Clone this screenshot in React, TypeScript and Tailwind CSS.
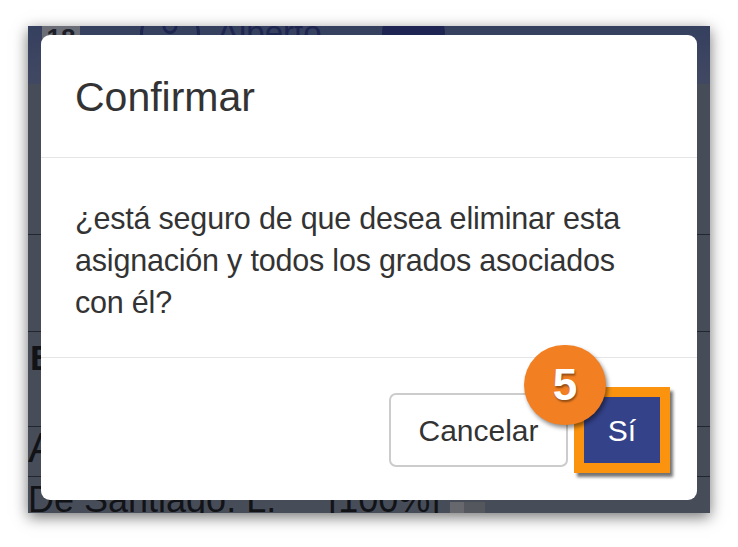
import { User } from "lucide-react";

const font = { fontFamily: '"Liberation Sans", Arial, sans-serif' };

const BackgroundRow = ({ children, className }: { children?: React.ReactNode; className?: string }) => (
  <div className={`border-b border-[#23262f] flex items-start ${className ?? ""}`}>{children}</div>
);

const App = () => {
  return (
    <div className="w-[738px] h-[547px] bg-white pl-[28px] pt-[26px]" style={font}>
      <div className="relative w-[682px] h-[487px] overflow-hidden bg-[#474c59] shadow-[0_4px_14px_rgba(0,0,0,0.55)]">
        {/* page behind the dialog */}
        <div className="h-[58px] bg-gradient-to-b from-[#35405f] to-[#414862] flex items-start pl-[14px]">
          <div className="w-[38px] h-[30px] bg-[#6b6e76] text-[#1c1f27] text-[26px] font-bold leading-[24px] text-center">18</div>
          <div className="w-[60px] h-[60px] ml-[60px] -mt-[22px] rounded-full border-[3px] border-[#1d2550] flex items-center justify-center">
            <User size={36} color="#1d2550" />
          </div>
          <span className="ml-[17px] -mt-[10px] text-[33px] leading-none text-[#1d2550]">Alberto</span>
          <div className="w-[63px] h-[54px] ml-[60px] -mt-[20px] rounded-full bg-[#1e2552]" />
        </div>
        <BackgroundRow className="h-[151px]" />
        <BackgroundRow className="h-[97px]" />
        <BackgroundRow className="h-[95px] pt-[8px]">
          <span className="text-[35px] leading-none font-bold text-[#111317] pl-[2px]">B</span>
        </BackgroundRow>
        <BackgroundRow className="h-[50px]">
          <span className="text-[42px] leading-none text-[#111317]">A</span>
        </BackgroundRow>
        <div className="pt-[5px] flex items-start text-[36px] leading-none text-[#111317]">
          <span>De Santiago. L.</span>
          <span className="ml-[52px]">[100%]</span>
          <span className="ml-[10px] mt-[20px] w-[35px] h-[20px] flex">
            <span className="w-[14px] bg-[#66686e]" />
            <span className="flex-1 bg-[#55575e]" />
          </span>
        </div>

        {/* dialog */}
        <div className="absolute left-[13px] top-[9px] w-[656px] h-[465px] bg-white rounded-[9px] flex flex-col">
          <div className="h-[123px] border-b border-[#e5e5e5] flex items-center px-[34px]">
            <h4 className="text-[41px] text-[#333333] leading-none pt-[2px]">Confirmar</h4>
          </div>
          <div className="h-[200px] border-b border-[#e5e5e5] px-[34px] pt-[39px]">
            <p className="text-[30.5px] leading-[42px] text-[#333333] tracking-[-0.2px]">
              ¿está seguro de que desea eliminar esta asignación y todos los grados asociados con él?
            </p>
          </div>
          <div className="flex-1 flex items-center justify-end pr-[27px] gap-[6px] pt-[2px]">
            <button className="w-[179px] h-[74px] border-2 border-[#cccccc] rounded-[7px] bg-white text-[30px] text-[#333333]">
              Cancelar
            </button>
            <div className="relative">
              <div className="border-[10px] border-[#fb930f] shadow-[3px_4px_3px_rgba(0,0,0,0.55)]">
                <button className="w-[76px] h-[66px] bg-[#34428a] text-white text-[30px] block">Sí</button>
              </div>
              <div className="absolute -left-[50px] -top-[42px] w-[82px] h-[80px] rounded-full bg-[#f27f22] shadow-[2px_3px_4px_rgba(0,0,0,0.45)] flex items-center justify-center">
                <span className="text-white font-bold text-[44px] leading-none [text-shadow:1px_2px_2px_rgba(0,0,0,0.4)]">5</span>
              </div>
            </div>
          </div>
        </div>
      </div>
    </div>
  );
};

export default App;
